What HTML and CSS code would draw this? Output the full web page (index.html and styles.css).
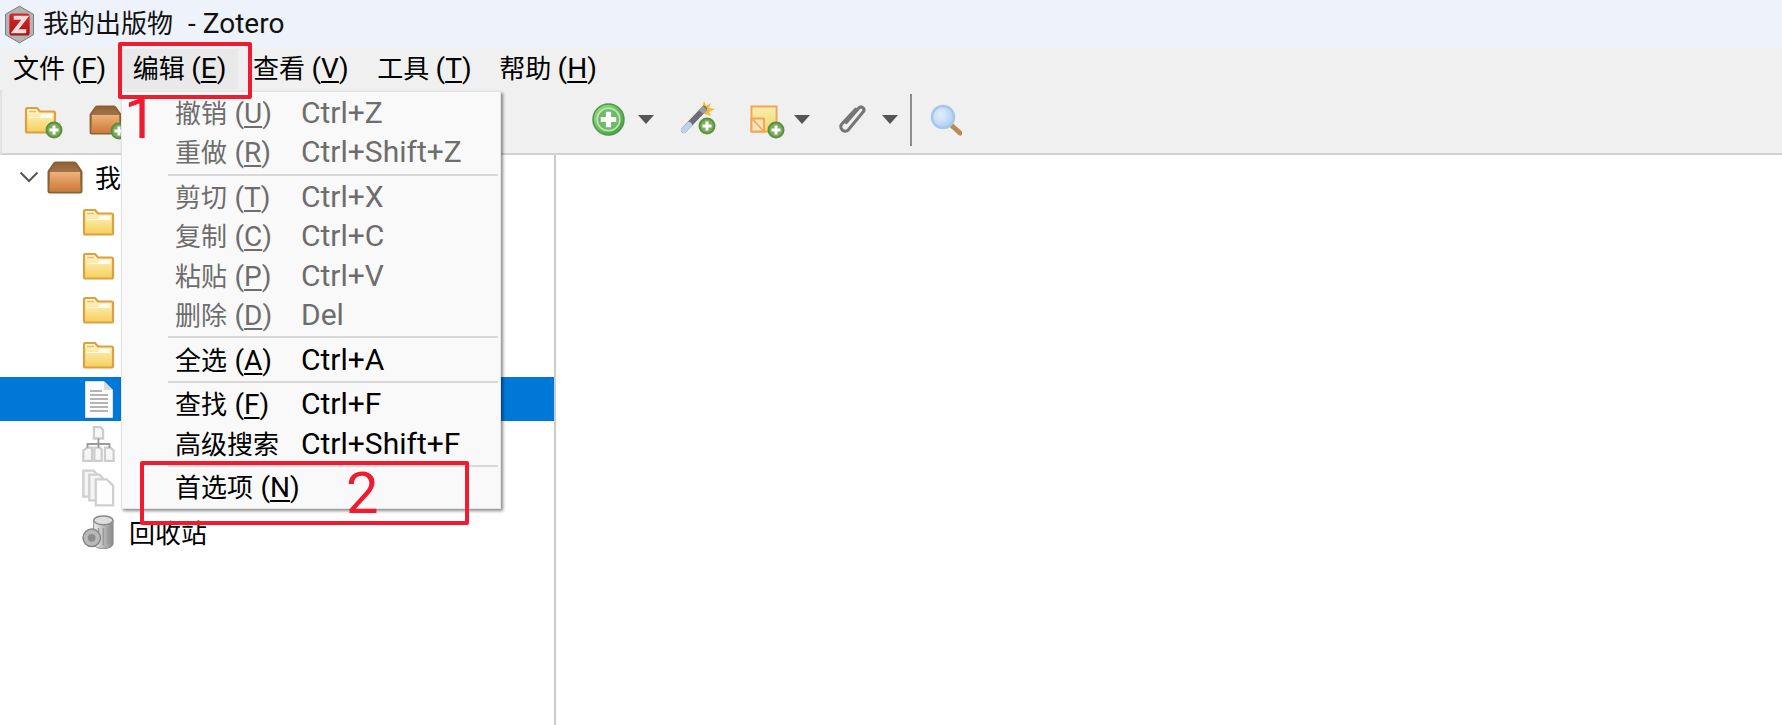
FILE: index.html
```html
<!DOCTYPE html>
<html lang="zh-CN">
<head>
<meta charset="utf-8">
<title>我的出版物 - Zotero</title>
<link rel="stylesheet" href="styles.css">
</head>
<body>
<svg class="defs" width="0" height="0" aria-hidden="true">
  <defs>
    <linearGradient id="gFolder" x1="0" y1="0" x2="0" y2="1"><stop offset="0" stop-color="#fff8cf"/><stop offset="1" stop-color="#f5cf5a"/></linearGradient>
    <linearGradient id="gBox" x1="0" y1="0" x2="0" y2="1"><stop offset="0" stop-color="#eeb27a"/><stop offset="1" stop-color="#cf7a3a"/></linearGradient>
    <linearGradient id="gLid" x1="0" y1="0" x2="0" y2="1"><stop offset="0" stop-color="#8f6238"/><stop offset="1" stop-color="#c59a68"/></linearGradient>
    <linearGradient id="gGreen" x1="0" y1="0" x2="1" y2="1"><stop offset="0" stop-color="#9fdc8c"/><stop offset="1" stop-color="#3f9a3c"/></linearGradient>
    <linearGradient id="gRed" x1="0" y1="0" x2="0" y2="1"><stop offset="0" stop-color="#d92828"/><stop offset="1" stop-color="#a81414"/></linearGradient>
    <linearGradient id="gNote" x1="0" y1="0" x2="0" y2="1"><stop offset="0" stop-color="#fbeeb0"/><stop offset="1" stop-color="#f3d568"/></linearGradient>
    <radialGradient id="gLens" cx=".4" cy=".4" r=".7"><stop offset="0" stop-color="#e4f0fc"/><stop offset="1" stop-color="#a9c9ee"/></radialGradient>
    <linearGradient id="gTrash" x1="0" y1="0" x2="1" y2="0"><stop offset="0" stop-color="#eee"/><stop offset="1" stop-color="#888"/></linearGradient>
    <symbol id="i-folder" viewBox="0 0 33 28">
      <path d="M2 3.500C2 2.500 2.500 2 3.500 2H13l3 3.500h13.500c1 0 1.500.5 1.500 1.500V25c0 1-.5 1.500-1.500 1.500h-26C2.500 26.500 2 26 2 25Z" fill="url(#gFolder)" stroke="#dba044" stroke-width="2.200"/>
      <path d="M5 11h11l2-3h10v4H5Z" fill="#fff" opacity=".8"/>
      <path d="M5 5.500h7" stroke="#e9bf6a" stroke-width="1.500"/>
    </symbol>
    <symbol id="i-box" viewBox="0 0 36 33">
      <path d="M1.500 10.500 7 2.500Q8 1.500 9 1.500h18q1 0 2 1l5.500 8V30q0 1.500-1.500 1.500H3Q1.500 31.500 1.500 30Z" fill="url(#gLid)" stroke="#8a6232" stroke-width="2"/>
      <rect x="3" y="11" width="30" height="19" fill="url(#gBox)"/>
    </symbol>
    <symbol id="i-plus" viewBox="0 0 18 18">
      <circle cx="9" cy="9" r="8.500" fill="#5b8f42"/>
      <circle cx="9" cy="9" r="6.500" fill="#79ad5c"/>
      <path d="M9 4.500v9M4.500 9h9" stroke="#fff" stroke-width="3"/>
    </symbol>
    <symbol id="i-caret" viewBox="0 0 16 9"><path d="M0 0h16L8 9Z" fill="#555"/></symbol>
    <symbol id="i-doc" viewBox="0 0 30 39">
      <path d="M1.500 1.500H20L28.500 10V37.500H1.500Z" fill="#fdfdfd" stroke="#dbe3ea"/>
      <path d="M20 1.500V10H28.500Z" fill="#d6dde4"/>
      <path d="M6 11h12M6 15h18M6 19h18M6 23h18M6 27h18M6 31h18" stroke="#b4b4b4" stroke-width="1.800"/>
    </symbol>
    <symbol id="i-tree" viewBox="0 0 36 40">
      <g fill="#f6f6f6" stroke="#cdcdcd" stroke-width="2.500">
        <path d="M13 1.500h7l3 3V14H13Z"/>
        <path d="M1.500 27 6 24h5v14.500H1.500Z"/>
        <path d="M13.500 24h6l2 2v12.500h-8Z"/>
        <path d="M25 24h6l3.500 3v11.500H25Z"/>
      </g>
      <path d="M18 14v5M6 24v-4h24v4M18 19v5" fill="none" stroke="#9a9a9a" stroke-width="2"/>
    </symbol>
    <symbol id="i-copies" viewBox="0 0 36 41">
      <path d="M1.500 1.500h11l4 4V30H1.500Z" fill="#f4f4f4" stroke="#cfcfcf" stroke-width="2.500"/>
      <path d="M8 6h11l4 4v24H8Z" fill="#f4f4f4" stroke="#cfcfcf" stroke-width="2.500"/>
      <path d="M15 11h12l7 7v21.500H15Z" fill="#fdfdfd" stroke="#cfcfcf" stroke-width="2.500"/>
    </symbol>
    <symbol id="i-trash" viewBox="0 0 34 36">
      <path d="M12 6v24c0 3 4 5 10 5s10-2 10-5V6Z" fill="url(#gTrash)" stroke="#8a8a8a"/>
      <ellipse cx="22" cy="6" rx="10" ry="4.500" fill="#ddd" stroke="#8a8a8a" stroke-width="1.500"/>
      <path d="M17 14v16M22 14v18M27 14v16" stroke="#9a9a9a" stroke-width="1.500"/>
      <circle cx="10" cy="24" r="9" fill="#b9b9b9" stroke="#858585" stroke-width="1.500"/>
      <circle cx="10" cy="24" r="4" fill="#8d8d8d"/>
    </symbol>
  </defs>
</svg>

<div class="app">
  <header class="titlebar">
    <svg class="logo" viewBox="0 0 30 39" aria-hidden="true">
      <path d="M15 .5 29.500 9V30L15 38.500.5 30V9Z" fill="#b4b4b4" stroke="#777"/>
      <rect x="4.500" y="8" width="21" height="23" rx="3" fill="url(#gRed)"/>
      <path d="M9 12.500h12L10 26.500h12" fill="none" stroke="#f3dcdc" stroke-width="4"/>
    </svg>
    <span class="title-text">我的出版物<span class="lat title-lat">- Zotero</span></span>
  </header>

  <nav class="menubar">
    <span class="menu-title m1">文件 <span class="lat">(<u>F</u>)</span></span>
    <span class="menu-title m2 is-open">编辑 <span class="lat">(<u>E</u>)</span></span>
    <span class="menu-title m3">查看 <span class="lat">(<u>V</u>)</span></span>
    <span class="menu-title m4">工具 <span class="lat">(<u>T</u>)</span></span>
    <span class="menu-title m5">帮助 <span class="lat">(<u>H</u>)</span></span>
  </nav>

  <div class="toolbar">
    <span class="tool t-folder"><svg class="i33" aria-hidden="true"><use href="#i-folder"/></svg><svg class="badge" aria-hidden="true"><use href="#i-plus"/></svg></span>
    <span class="tool t-box"><svg class="i33 tall-box" aria-hidden="true"><use href="#i-box"/></svg><svg class="badge" aria-hidden="true"><use href="#i-plus"/></svg></span>
    <svg class="t-add" viewBox="0 0 32 32" aria-hidden="true">
      <circle cx="16" cy="16" r="15" fill="url(#gGreen)" stroke="#4a9a48" stroke-width="1.500"/>
      <circle cx="16" cy="16" r="11" fill="#6dbb66" stroke="#c4e6b8" stroke-width="1.500"/>
      <path d="M16 8.500v15M8.500 16h15" stroke="#fff" stroke-width="5"/>
    </svg>
    <svg class="caret c1" aria-hidden="true"><use href="#i-caret"/></svg>
    <span class="tool t-wand">
      <svg class="i-wand" viewBox="0 0 36 36" aria-hidden="true">
        <path d="M24 2l2 5 5-3-2 5 6 1-6 3 2 4-6-2-3-3 1-6Z" fill="#f9b632"/>
        <path d="M4 31 24 10" stroke="#6b6f75" stroke-width="6" stroke-linecap="round"/>
        <path d="M4 31 9 26" stroke="#bcd4ea" stroke-width="6" stroke-linecap="round"/>
        <path d="M21 13 25 9" stroke="#9a9ea3" stroke-width="6"/>
      </svg>
      <svg class="badge badge-wand" aria-hidden="true"><use href="#i-plus"/></svg>
    </span>
    <span class="tool t-note">
      <svg class="i-note" viewBox="0 0 30 30" aria-hidden="true">
        <rect x="1.500" y="1.500" width="26" height="26" fill="url(#gNote)" stroke="#efa754" stroke-width="2"/>
        <rect x="1.500" y="14" width="13" height="13.500" fill="#fbe1bd" stroke="#efa754" stroke-width="2"/>
        <path d="M3 15 14 27" stroke="#efa754" stroke-width="1.500"/>
      </svg>
      <svg class="badge" aria-hidden="true"><use href="#i-plus"/></svg>
    </span>
    <svg class="caret c2" aria-hidden="true"><use href="#i-caret"/></svg>
    <svg class="t-clip" viewBox="0 0 32 32" aria-hidden="true">
      <path d="M10 19 22 5c3-3 7 1 4 4L12 26c-4 4-10-2-6-6L19 6" fill="none" stroke="#767676" stroke-width="3" stroke-linecap="round"/>
    </svg>
    <svg class="caret c3" aria-hidden="true"><use href="#i-caret"/></svg>
    <span class="toolbar-sep"></span>
    <svg class="t-search" viewBox="0 0 32 32" aria-hidden="true">
      <path d="M20 20 30 29" stroke="#b98a52" stroke-width="5" stroke-linecap="round"/>
      <circle cx="13" cy="13" r="11" fill="url(#gLens)" stroke="#a6c6ec" stroke-width="2.500"/>
    </svg>
  </div>

  <main class="workspace">
    <aside class="sidebar">
      <div class="row r0">
        <svg class="chev" viewBox="0 0 20 12" aria-hidden="true"><path d="M1.500 1.500 10 10l8.500-8.500" fill="none" stroke="#555" stroke-width="2"/></svg>
        <svg class="i-box-row" aria-hidden="true"><use href="#i-box"/></svg>
        <span class="row-label first">我</span>
      </div>
      <div class="row sub"><svg class="i33" aria-hidden="true"><use href="#i-folder"/></svg></div>
      <div class="row sub"><svg class="i33" aria-hidden="true"><use href="#i-folder"/></svg></div>
      <div class="row sub"><svg class="i33" aria-hidden="true"><use href="#i-folder"/></svg></div>
      <div class="row sub"><svg class="i33" aria-hidden="true"><use href="#i-folder"/></svg></div>
      <div class="row sub selected"><svg class="i-doc-row" aria-hidden="true"><use href="#i-doc"/></svg></div>
      <div class="row sub"><svg class="i-tall" aria-hidden="true"><use href="#i-tree"/></svg></div>
      <div class="row sub"><svg class="i-tall" aria-hidden="true"><use href="#i-copies"/></svg></div>
      <div class="row sub"><svg class="i-tall" aria-hidden="true"><use href="#i-trash"/></svg><span class="row-label">回收站</span></div>
    </aside>
    <section class="content"></section>
  </main>
</div>

<div class="popup">
  <div class="item off"><span class="lbl">撤销 <span class="lat">(<u>U</u>)</span></span><span class="key">Ctrl+Z</span></div>
  <div class="item off"><span class="lbl">重做 <span class="lat">(<u>R</u>)</span></span><span class="key">Ctrl+Shift+Z</span></div>
  <div class="sep"></div>
  <div class="item off"><span class="lbl">剪切 <span class="lat">(<u>T</u>)</span></span><span class="key">Ctrl+X</span></div>
  <div class="item off"><span class="lbl">复制 <span class="lat">(<u>C</u>)</span></span><span class="key">Ctrl+C</span></div>
  <div class="item off"><span class="lbl">粘贴 <span class="lat">(<u>P</u>)</span></span><span class="key">Ctrl+V</span></div>
  <div class="item off"><span class="lbl">删除 <span class="lat">(<u>D</u>)</span></span><span class="key">Del</span></div>
  <div class="sep"></div>
  <div class="item"><span class="lbl">全选 <span class="lat">(<u>A</u>)</span></span><span class="key">Ctrl+A</span></div>
  <div class="sep"></div>
  <div class="item"><span class="lbl">查找 <span class="lat">(<u>F</u>)</span></span><span class="key">Ctrl+F</span></div>
  <div class="item"><span class="lbl">高级搜索</span><span class="key">Ctrl+Shift+F</span></div>
  <div class="sep"></div>
  <div class="item"><span class="lbl">首选项 <span class="lat">(<u>N</u>)</span></span></div>
</div>

<div class="mark box-1"></div>
<div class="mark box-2"></div>
<span class="num num-1">1</span>
<span class="num num-2">2</span>
</body>
</html>
```

FILE: styles.css
```css
html, body {
  margin: 0;
  height: 100%;
  overflow: hidden;
  background: #fff;
  font-family: Roboto, "Noto Sans CJK SC", sans-serif;
  font-size: 26px;
  color: #000;
}
u { text-underline-offset: 3px; text-decoration-thickness: 1.5px; }
.defs { position: absolute; }
svg { display: block; flex: none; }
.lat { font-size: 28px; }
.lbl .lat { margin-left: 1px; }

.app { display: flex; flex-direction: column; height: 725px; }

.titlebar {
  height: 48px;
  box-sizing: border-box;
  padding-bottom: 1px;
  flex: none;
  display: flex;
  align-items: center;
  gap: 9px;
  padding-left: 5px;
  background: #eef3fb;
}
.logo { width: 29px; height: 39px; margin-top: 1px; }
.title-text { color: #111; line-height: 40px; }
.title-lat { margin-left: 15px; }

.menubar {
  height: 42px;
  flex: none;
  display: flex;
  align-items: center;
  background: #f0f0f0;
}
.menu-title { white-space: nowrap; line-height: 40px; padding: 0 8px; }
.m1 { margin-left: 5px; }
.m2 { margin-left: 7.500px; padding-left: 11px; padding-right: 11px; margin-right: 7.500px; }
.m3 { margin-right: 12.500px; }
.m4 { margin-right: 11.500px; }
.is-open { background: #e9e9e9; }

.toolbar {
  height: 63px;
  flex: none;
  display: flex;
  align-items: center;
  background: #f0f0f0;
  border-left: 2px solid #e2e2e2;
  border-bottom: 2px solid #d2d2d2;
}
.toolbar > * { position: relative; top: -2px; }
.tool { display: block; flex: none; }
.badge { position: absolute; right: -6px; bottom: -5px; width: 18px; height: 18px; }
.badge-wand { right: 0; bottom: 0; }
.i33 { width: 33px; height: 28px; }
.tall-box { width: 33px; height: 30px; }
.t-folder { margin-left: 22px; }
.t-box { margin-left: 32px; }
.t-add { width: 33px; height: 33px; margin-left: 470px; }
.caret { width: 16px; height: 9px; }
.c1 { margin-left: 13px; }
.t-wand { margin-left: 26px; margin-bottom: 5px; }
.i-wand { width: 36px; height: 36px; }
.t-note { margin-left: 34px; }
.i-note { width: 29px; height: 29px; }
.c2 { margin-left: 15px; }
.t-clip { width: 33px; height: 33px; margin-left: 26px; }
.c3 { margin-left: 13px; }
.toolbar-sep { width: 2px; height: 52px; background: #8e8e8e; margin-left: 12px; }
.t-search { width: 32px; height: 32px; margin-left: 18px; }

.workspace { flex: 1; display: flex; min-height: 0; }
.sidebar { width: 554px; flex: none; border-right: 2px solid #ccc; }
.content { flex: 1; }

.row { height: 44.400px; display: flex; align-items: center; white-space: nowrap; }
.sub { padding-left: 82px; }
.row-label { margin-left: 14px; padding-bottom: 1px; }
.row-label.first { margin-left: 12px; }
.selected { background: #0078d7; color: #fff; }
.chev { width: 20px; height: 12px; margin-left: 19px; margin-right: 8px; }
.i-box-row { width: 36px; height: 33px; }
.i-doc-row { width: 30px; height: 39px; margin-left: 2px; margin-right: 1px; }
.i-tall { width: 33px; height: 38px; }

.popup {
  position: absolute;
  left: 121px;
  top: 91px;
  width: 380px;
  height: 418px;
  box-sizing: border-box;
  padding-top: 1px;
  background: #f9f9f9;
  border: 1px solid #e4e4e4;
  box-shadow: 2px 2px 3px rgba(0,0,0,.45);
}
.item {
  height: 39.250px;
  line-height: 39.250px;
  display: flex;
  align-items: baseline;
  padding-left: 53px;
  white-space: nowrap;
}
.lbl { width: 126px; flex: none; }
.key { font-size: 30px; }
.off { color: #6d6d6d; }
.sep { height: 2px; margin: 2px 2px 1.500px 46px; background: #d8d8d8; }

.mark { position: absolute; box-sizing: border-box; border: 4px solid #ee1c2e; border-radius: 2px; }
.box-1 { left: 118px; top: 42px; width: 134px; height: 57px; }
.box-2 { left: 140px; top: 461px; width: 329px; height: 64px; }
.num { position: absolute; color: #ee1c2e; font-family: Roboto, sans-serif; font-size: 58px; line-height: 58px; }
.num-1 { left: 124px; top: 89px; }
.num-2 { left: 346px; top: 464px; }
```
